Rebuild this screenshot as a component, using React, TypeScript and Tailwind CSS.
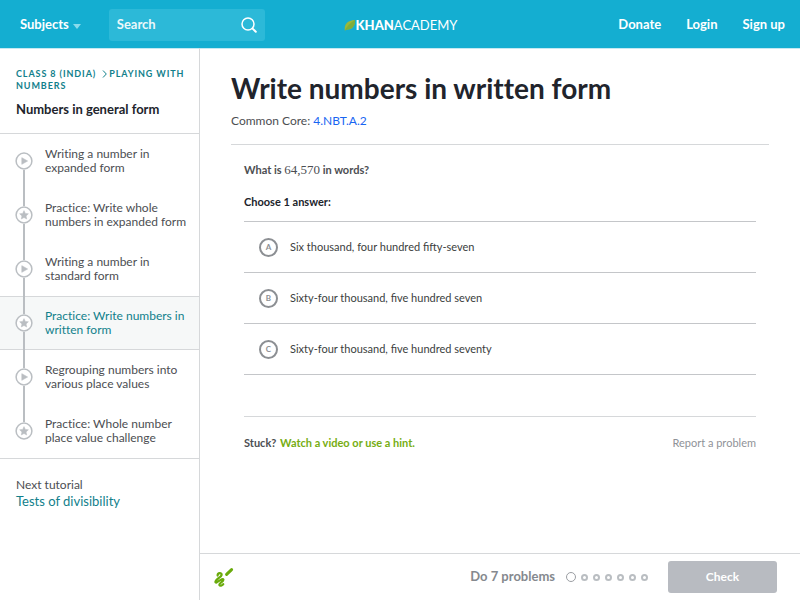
const lessons = [
   { title: "Writing a number in expanded form", kind: "video" },
   { title: "Practice: Write whole numbers in expanded form", kind: "exercise" },
   { title: "Writing a number in standard form", kind: "video" },
   { title: "Practice: Write numbers in written form", kind: "exercise", active: true },
   { title: "Regrouping numbers into various place values", kind: "video" },
   { title: "Practice: Whole number place value challenge", kind: "exercise" },
];

const choices = [
   { letter: "A", text: "Six thousand, four hundred fifty-seven" },
   { letter: "B", text: "Sixty-four thousand, five hundred seven" },
   { letter: "C", text: "Sixty-four thousand, five hundred seventy" },
];

const LessonIcon = ({ kind }: { kind: string }) => (
   <svg viewBox="0 0 18 18" className="w-[18px] h-[18px] shrink-0" aria-hidden="true">
      <circle cx="9" cy="9" r="7.9" fill="#fff" stroke="#babec2" strokeWidth="1.5" />
      {kind === "video" ? (
         <path d="M6.8 5.7v6.6L12.6 9z" fill="#babec2" stroke="#babec2" strokeWidth=".6" strokeLinejoin="round" />
      ) : (
         <path d="M9 4.6l1.3 2.8 3.1.4-2.3 2.1.6 3.1L9 11.5 6.3 13l.6-3.1-2.3-2.1 3.1-.4z" fill="#babec2" stroke="#babec2" strokeWidth=".5" strokeLinejoin="round" />
      )}
   </svg>
);

const Header = () => {
   return (
      <header className="h-12 bg-[#14aed1] shadow-[0_1px_#c4e9f2] text-white text-[13px] font-bold flex items-center pt-[2px] pl-4 pr-[15px]">
         <div className="flex-1 flex items-center">
            <button type="button" className="flex items-center gap-1 pl-1">
               Subjects
               <svg viewBox="0 0 8 5" className="w-2 h-[5px] mt-[2px]" aria-hidden="true">
                  <path d="M0 0h8L4 5z" fill="#8adbec" />
               </svg>
            </button>
            <label className="flex items-center w-39 h-8 ml-7 px-2 rounded-[3px] bg-[#2cb9d8]">
               <input type="search" name="search" aria-label="Search" placeholder="Search" className="min-w-0 flex-1 bg-transparent outline-none placeholder:text-white placeholder:opacity-90" />
               <svg viewBox="0 0 16 16" className="w-4 h-4 shrink-0" fill="none" stroke="#fff" strokeLinecap="round" aria-hidden="true">
                  <circle cx="7" cy="7" r="6" strokeWidth="1.5" />
                  <path d="M11.6 11.6l3.2 3.2" strokeWidth="2" />
               </svg>
            </label>
         </div>
         <a href="#" className="flex items-center text-[13px] leading-4">
            <svg viewBox="0 0 12 12" className="w-3 h-3" aria-hidden="true">
               <path d="M.8 11.500C0 5.500 3.500 1.200 11 1c.4 6-3 9.800-8 9.400z" fill="#9ab83a" />
               <path d="M.8 11.500C3 7 6 4 11 1c.4 6-3 9.800-8 9.400z" fill="#7fae3c" />
            </svg>
            <span className="font-black">KHAN</span>
            <span className="font-normal">ACADEMY</span>
         </a>
         <nav className="flex-1 flex justify-end gap-[25px]">
            <a href="#">Donate</a>
            <a href="#">Login</a>
            <a href="#">Sign up</a>
         </nav>
      </header>
   );
};

const Sidebar = () => {
   return (
      <aside className="w-[200px] shrink-0 border-r border-[#d6d8da]">
         <div className="h-[86px] pl-4 pr-2 pt-5 border-b border-[#d6d8da]">
            <div className="text-[9px] leading-3 font-bold uppercase tracking-widest text-[#11808b]">
               <a href="#">Class 8 (India)</a>
               <svg viewBox="0 0 5 8" className="inline w-[5px] h-2 ml-[6px] mr-[2px] -mt-[2px]" fill="none" stroke="#11808b" aria-hidden="true">
                  <path d="M1 .5L4.3 4 1 7.5" />
               </svg>
               <a href="#">Playing with numbers</a>
            </div>
            <h2 className="mt-[9px] text-[13px] leading-4 font-bold text-[#21242c]">Numbers in general form</h2>
         </div>
         <ul className="border-b border-[#d6d8da]">
            {lessons.map((lesson, i) => (
               <li key={lesson.title} className={lesson.active ? "bg-[#f6f8f8] shadow-[inset_0_1px_#d6d8da,inset_0_-1px_#d6d8da]" : ""}>
                  <a href="#" className="h-[54px] pl-[15px] pr-3 flex gap-3 items-stretch">
                     <span className="flex flex-col items-center">
                        <span className={i === 0 ? "flex-1" : "flex-1 w-[2px] bg-[#babec2]"} />
                        <LessonIcon kind={lesson.kind} />
                        <span className={i === lessons.length - 1 ? "flex-1" : "flex-1 w-[2px] bg-[#babec2]"} />
                     </span>
                     <span className={lesson.active ? "self-center text-xs leading-[14px] text-[#11808b]" : "self-center text-xs leading-[14px] text-[#4c4e52]"}>
                        {lesson.title}
                     </span>
                  </a>
               </li>
            ))}
         </ul>
         <div className="px-4 pt-[18px]">
            <p className="text-xs leading-4 text-[#4c4e52]">Next tutorial</p>
            <a href="#" className="block text-[13px] leading-4 text-[#11808b]">Tests of divisibility</a>
         </div>
      </aside>
   );
};

const Exercise = () => {
   return (
      <main className="flex-1 px-[31px] pt-5">
         <h1 className="text-[28px] leading-10 font-bold text-[#21242c]">Write numbers in written form</h1>
         <p className="mt-1 text-xs leading-[18px] text-[#4c4e52]">
            Common Core: <a href="#" className="text-[#1865f2]">4.NBT.A.2</a>
         </p>
         <form id="exercise" className="mt-[14px] border-t border-[#d6d8da] px-[13px] pt-[17px] text-[11px] leading-4">
            <p className="font-bold text-[#4c4e52]">
               What is <span className="font-['Liberation_Serif',serif] font-normal text-[13px] leading-4">64,570</span> in words?
            </p>
            <fieldset className="mt-4">
               <legend className="font-bold text-[#21242c]">Choose 1 answer:</legend>
               <div className="mt-[11px] border-b border-[#c4c6c9] [font-variant-ligatures:normal]">
                  {choices.map((choice) => (
                     <label key={choice.letter} className="h-[51px] pl-[15px] flex items-center gap-3 border-t border-[#c4c6c9] text-[#3b3e40]">
                        <input type="radio" name="answer" value={choice.letter} className="sr-only" />
                        <span className="w-[19px] h-[19px] rounded-full border-2 border-[#8c8f93] flex items-center justify-center text-[8px] leading-none font-bold text-[#8c8f93]">
                           {choice.letter}
                        </span>
                        {choice.text}
                     </label>
                  ))}
               </div>
            </fieldset>
            <div className="mt-[41px] pt-[18px] border-t border-[#d6d8da] flex justify-between">
               <p className="font-bold text-[#4c4e52]">
                  Stuck? <a href="#" className="ml-px text-[#76ad12]">Watch a video or use a hint.</a>
               </p>
               <a href="#" className="text-[#8f9297]">Report a problem</a>
            </div>
         </form>
      </main>
   );
};

const TaskBar = () => {
   return (
      <footer className="h-[47px] border-t border-[#d6d8da] pl-[14px] pr-[23px] flex items-center">
         <button type="button" aria-label="Show scratchpad">
            <svg viewBox="0 0 20 20" className="w-5 h-5" fill="none" stroke="#6aab0c" strokeLinecap="round" strokeLinejoin="round" aria-hidden="true">
               <path d="M12.6 7.4L17.6 2.6" strokeWidth="3" />
               <path d="M3.6 8.6C3.6 5.6 8 5.400 7.600 8C7.300 10.200 1.200 12.600 1.400 15C1.600 17.600 8.800 9.800 9.400 12.600C9.800 14.800 4.600 16 5.400 18C6 19.200 8 18.600 9.200 17.200" strokeWidth="2.2" />
            </svg>
         </button>
         <p className="ml-auto text-[13px] font-bold text-[#85898e]">Do 7 problems</p>
         <ul className="ml-[11px] flex items-center gap-[5px]">
            {[1, 2, 3, 4, 5, 6, 7].map((n) => (
               <li key={n} className={n === 1 ? "w-[10px] h-[10px] rounded-full border border-[#9b9ea3]" : "w-[7px] h-[7px] rounded-full border-2 border-[#babec2]"} />
            ))}
         </ul>
         <button type="submit" form="exercise" className="ml-5 w-[109px] h-8 rounded-[3px] bg-[#b8bbc1] text-xs font-bold text-white">Check</button>
      </footer>
   );
};

const App = () => {
   return (
      <div className="min-h-screen flex flex-col bg-white font-[Lato,sans-serif] [font-variant-ligatures:none]">
         <Header />
         <div className="flex-1 flex">
            <Sidebar />
            <div className="flex-1 flex flex-col">
               <Exercise />
               <TaskBar />
            </div>
         </div>
      </div>
   );
};

export default App;
